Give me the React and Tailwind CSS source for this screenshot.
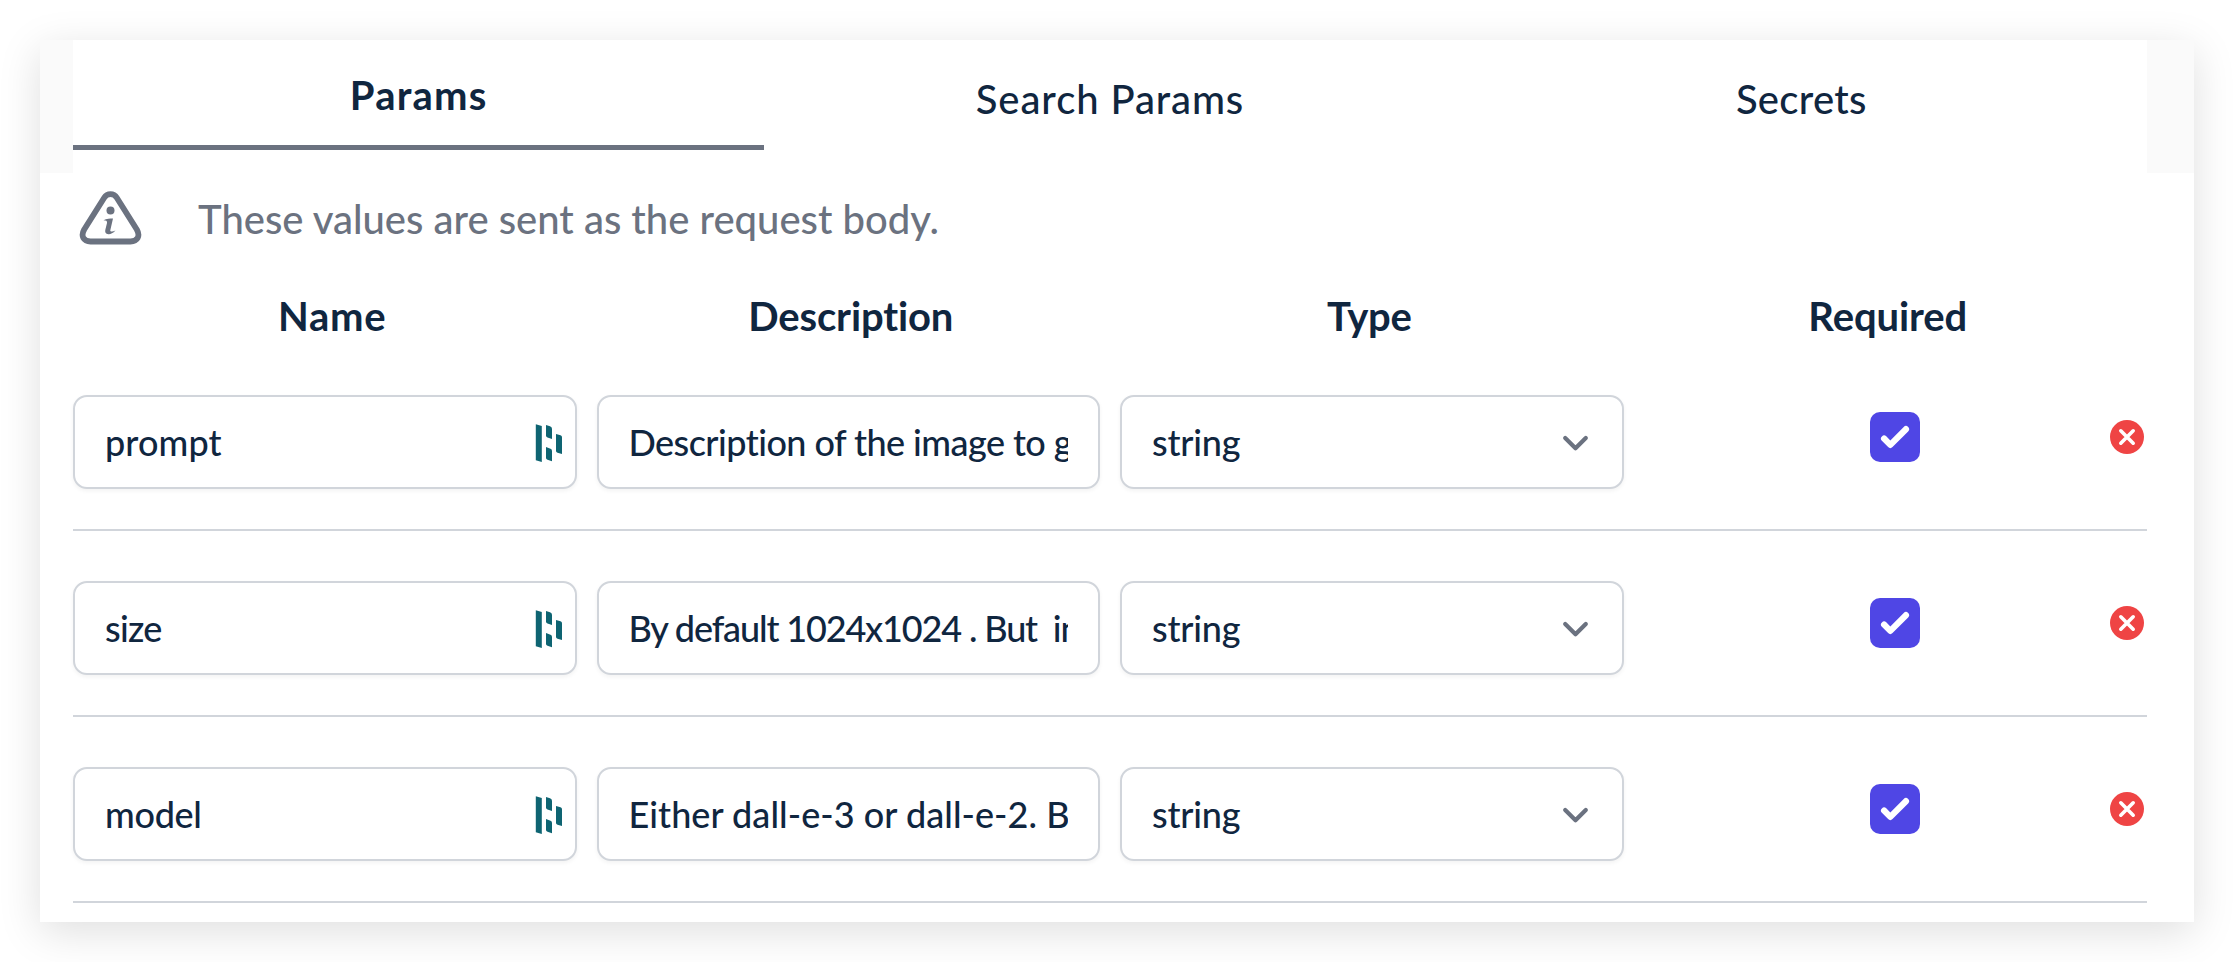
const rows = [
  { name: "prompt", description: "Description of the image to generate", ns: "tracking-[0.1px]", ds: "tracking-[-0.55px]" },
  { name: "size", description: "By default 1024x1024 . But  in case", ns: "tracking-[-0.7px]", ds: "tracking-[-1.15px]" },
  { name: "model", description: "Either dall-e-3 or dall-e-2. By default", ns: "tracking-[-0.3px]", ds: "tracking-[0.05px]" },
];

const field = "flex h-[94px] min-w-0 items-center rounded-[14px] border-2 border-[#d1d5db] bg-white shadow-[0_2px_4px_rgba(0,0,0,0.05)]";

function InfoIcon() {
  return (
    <svg className="mb-[2px] block h-[56px] w-[63px]" viewBox="0 0 63 56" fill="none">
      <path d="M25.200 7.800 L5.200 39.500 C1.500 46 4.500 51.500 11.500 51.500 H51.500 C58.500 51.500 61.500 46 57.800 39.500 L37.800 7.800 C34.800 3 28.200 3 25.200 7.800Z" stroke="#6b7280" strokeWidth="5.800" strokeLinejoin="round" />
      <circle cx="31.500" cy="20.500" r="4" fill="#6b7280" />
      <path d="M24.500 30.300 C27.500 28.800 31 28.600 34 28.600 L31.300 40.200 C31 42 33.500 42 36.500 40.600 C34 43.600 31.500 44.300 29.500 44.200 C26.500 44 25.800 42 26.400 39.500 L28 33 C28.400 31 27 30.300 24.500 30.300Z" fill="#6b7280" />
    </svg>
  );
}

function FieldMark() {
  return (
    <svg className="mt-[2px] block h-[38px] w-[28px] shrink-0" viewBox="0 0 28 38" fill="#0e6472">
      <path d="M.8 .3 L6.800 2V38L.8 36.300Z" />
      <path d="M11 .9 L15 2.200Q17 3 17 4.800V15L12.500 13.500Q11 13 11 11.500Z" />
      <path d="M11 23 L15.500 24.700Q17 25.300 17 27V37.200L12.500 35.800Q11 35.300 11 34Z" />
      <path d="M21 10 L25.500 11.300Q27 11.800 27 13.200V30L22.500 28.800Q21 28.300 21 27Z" />
    </svg>
  );
}

function Row({ row }) {
  return (
    <div className="grid h-[186px] grid-cols-4 gap-5 border-b-2 border-[#d1d5db] pt-[50px]">
      <div className={field + " justify-between pl-[30px] pr-3"}>
        <span className={"text-[36px] " + row.ns}>{row.name}</span>
        <FieldMark />
      </div>
      <div className={field + " px-[30px]"}>
        <div className={"w-full overflow-hidden whitespace-pre text-[36px] " + row.ds}>{row.description}</div>
      </div>
      <div className={field + " justify-between pl-[30px] pr-[33px]"}>
        <span className="text-[36px] tracking-[-0.2px]">string</span>
        <svg className="mt-[2px] h-[17px] w-[27px]" viewBox="0 0 27 17" fill="none" stroke="#6b7280" strokeWidth="4.200" strokeLinecap="round" strokeLinejoin="round">
          <path d="M3.200 3L13.500 13.300L23.800 3" />
        </svg>
      </div>
      <div className="grid h-[84px] grid-cols-[1fr_50px_1fr] items-center">
        <span />
        <span className="flex size-[50px] items-center justify-center rounded-[10px] bg-[#4f46e5]">
          <svg className="size-[50px]" viewBox="0 0 16 16" fill="#fff">
            <path d="M12.207 4.793a1 1 0 010 1.414l-5 5a1 1 0 01-1.414 0l-2-2a1 1 0 011.414-1.414L6.500 9.086l4.293-4.293a1 1 0 011.414 0z" />
          </svg>
        </span>
        <svg className="mr-[3px] size-[34px] justify-self-end" viewBox="0 0 34 34">
          <circle cx="17" cy="17" r="17" fill="#ef4444" />
          <path d="M10.800 10.800L23.200 23.200M23.200 10.800L10.800 23.200" stroke="#fff" strokeWidth="3.600" strokeLinecap="round" />
        </svg>
      </div>
    </div>
  );
}

export default function App() {
  return (
    <div className="h-[962px] w-[2234px] overflow-hidden bg-white p-10 font-['Lato','Liberation_Sans',sans-serif] font-medium text-[#10263f]">
      <div className="h-[882px] bg-white shadow-[0_10px_40px_rgba(0,0,0,0.13)]">
        <div className="h-[133px] bg-[#fafafa] pl-[33px] pr-[47px]">
          <div className="grid h-full grid-cols-3 bg-white text-center text-[40px] leading-[60px]">
            <div className="h-[110px] border-b-[5px] border-[#6b7280] pt-[25px] font-bold tracking-[1.2px]">Params</div>
            <div className="pt-[29px] tracking-[0.9px]">Search Params</div>
            <div className="pt-[29px] tracking-[0.3px]">Secrets</div>
          </div>
        </div>
        <div className="pl-[33px] pr-[47px]">
          <div className="flex h-[92px] items-center text-[40px] text-[#6b7280]">
            <div className="w-[125px] pl-[6px]"><InfoIcon /></div>
            <div>These values are sent as the request body.</div>
          </div>
          <div className="grid h-[80px] grid-cols-4 pt-[21px] text-center text-[40px] font-bold leading-[60px]">
            <div className="tracking-[0.7px]">Name</div>
            <div className="tracking-[-0.15px]">Description</div>
            <div className="tracking-[-0.3px]">Type</div>
            <div className="tracking-[-0.1px]">Required</div>
          </div>
          {rows.map((r) => <Row key={r.name} row={r} />)}
        </div>
      </div>
    </div>
  );
}
